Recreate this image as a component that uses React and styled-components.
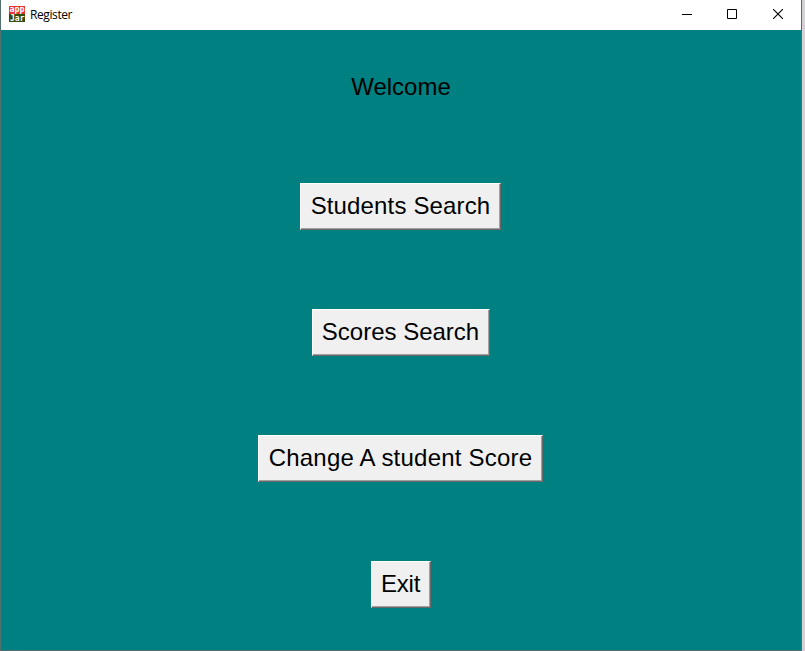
import React from "react";
import styled, { createGlobalStyle } from "styled-components";

const GlobalStyle = createGlobalStyle`
  * { box-sizing: border-box; }
  body { margin: 0; overflow: hidden; background: #d3d1d5; }
`;

const Window = styled.main`
  width: 802px;
  height: 651px;
  display: flex;
  flex-direction: column;
  border: solid #52706f;
  border-width: 0 1px 1px;
  background: #008080;
`;

const TitleBar = styled.header`
  height: 30px;
  flex: none;
  display: flex;
  align-items: center;
  padding-left: 8px;
  background: #fff;
`;

const AppIcon = styled.svg`
  width: 16px;
  height: 16px;
  display: block;
  margin-top: -2px;
`;

const Title = styled.span`
  flex: 1;
  margin-left: 5px;
  font: 12px/16px "Open Sans", "Noto Sans", sans-serif;
  letter-spacing: -0.4px;
  color: #000;
`;

const WindowControl = styled.button`
  width: 46px;
  height: 30px;
  padding: 0 0 2px;
  border: 0;
  background: transparent;
  display: grid;
  place-items: center;

  svg { display: block; }
`;

const Controls = styled.div`
  display: flex;
`;

const Content = styled.section`
  flex: 1;
  display: flex;
  flex-direction: column;
  align-items: center;
  padding-top: 39px;
  font: 24px/36px "Liberation Sans", Arial, sans-serif;
  color: #000;
`;

const Heading = styled.h1`
  margin: 0 0 78px;
  font: inherit;
`;

const Menu = styled.nav`
  display: flex;
  flex-direction: column;
  align-items: center;
  gap: 79px;
  padding-right: 1px;
`;

const MenuButton = styled.button`
  width: ${({ $width }) => $width}px;
  height: 47px;
  padding: 0 0 2px;
  border: 1px solid;
  border-color: #fff #696969 #696969 #fff;
  box-shadow: inset -1px -1px #a0a0a0;
  background: #f0f0f0;
  color: #000;
  font: inherit;
  letter-spacing: ${({ $spacing }) => $spacing}px;
  white-space: nowrap;
`;

const actions = [
  { label: "Students Search", width: 201, spacing: 0.15 },
  { label: "Scores Search", width: 178, spacing: 0 },
  { label: "Change A student Score", width: 285, spacing: 0.22 },
  { label: "Exit", width: 60, spacing: -0.2 },
];

export default function App() {
  return (
    <>
      <GlobalStyle />
      <Window>
        <TitleBar>
          <AppIcon viewBox="0 0 16 16">
            <rect width="16" height="8" fill="#e8352f" />
            <rect y="8" width="16" height="8" fill="#344c0b" />
            <g fill="#fff" fontFamily="DejaVu Sans Mono, monospace" fontWeight="700" fontSize="8">
              <text x="0.5" y="6" textLength="15" lengthAdjust="spacingAndGlyphs">app</text>
              <text x="1" y="15" textLength="14.5" lengthAdjust="spacingAndGlyphs">Jar</text>
            </g>
          </AppIcon>
          <Title>Register</Title>
          <Controls>
            <WindowControl aria-label="Minimize">
              <svg width="12" height="10"><path d="M2 5.5H12" stroke="#000" /></svg>
            </WindowControl>
            <WindowControl aria-label="Maximize">
              <svg width="10" height="10"><path d="M.5.5h9v9h-9z" fill="none" stroke="#000" /></svg>
            </WindowControl>
            <WindowControl aria-label="Close">
              <svg width="10" height="10"><path d="M0 0L10 10M10 0L0 10" stroke="#000" strokeWidth="1.1" /></svg>
            </WindowControl>
          </Controls>
        </TitleBar>
        <Content>
          <Heading>Welcome</Heading>
          <Menu>
            {actions.map(({ label, width, spacing }) => (
              <MenuButton key={label} $width={width} $spacing={spacing}>{label}</MenuButton>
            ))}
          </Menu>
        </Content>
      </Window>
    </>
  );
}
